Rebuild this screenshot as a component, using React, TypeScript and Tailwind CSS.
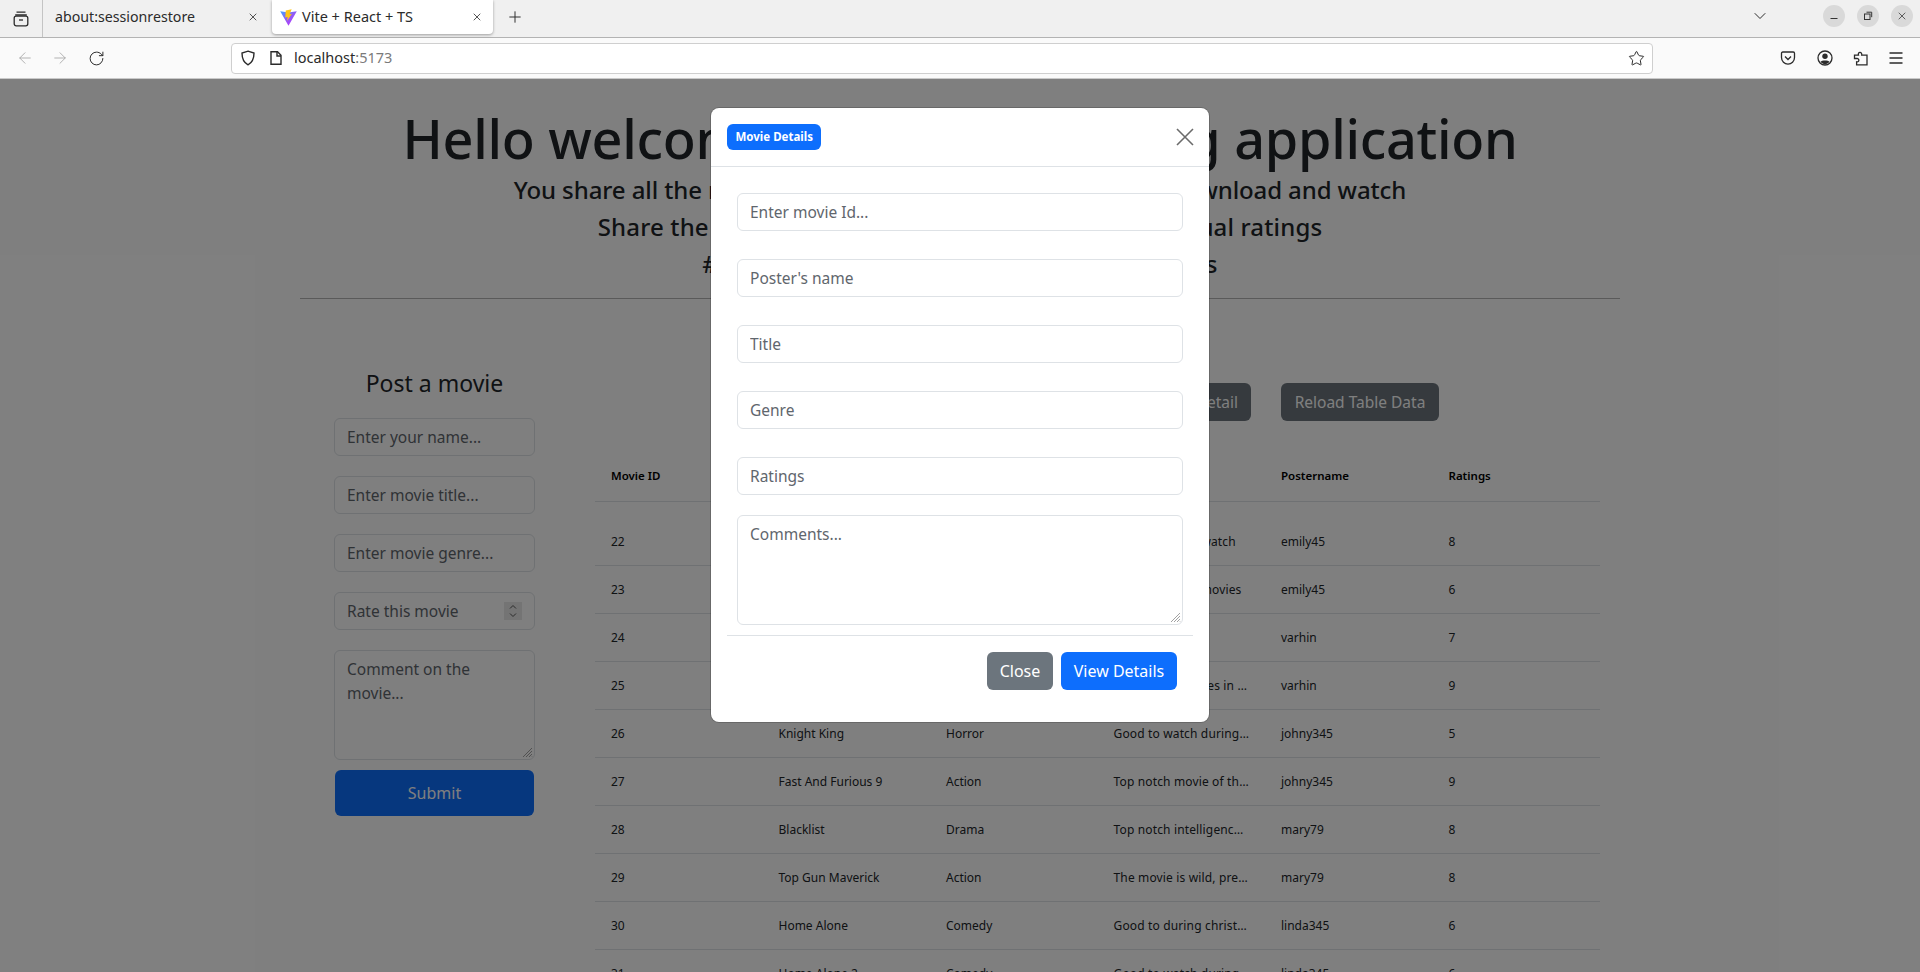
import React from "react";
import { ArrowLeft, ArrowRight, ChevronDown, Plus, RotateCw, Star, X } from "lucide-react";

const rows = [
  ["22", "", "", "Good movie to watch", "emily45", "8"],
  ["23", "", "", "One of the top movies", "emily45", "6"],
  ["24", "", "", "Nice movie", "varhin", "7"],
  ["25", "", "", "Best of the movies in the world", "varhin", "9"],
  ["26", "Knight King", "Horror", "Good to watch during the night", "johny345", "5"],
  ["27", "Fast And Furious 9", "Action", "Top notch movie of the year", "johny345", "9"],
  ["28", "Blacklist", "Drama", "Top notch intelligence movie", "mary79", "8"],
  ["29", "Top Gun Maverick", "Action", "The movie is wild, pretty good", "mary79", "8"],
  ["30", "Home Alone", "Comedy", "Good to during christmas time", "linda345", "6"],
  ["31", "Home Alone 2", "Comedy", "Good to watch during christmas", "linda345", "6"],
];

const inputClass =
  "block h-[38px] w-full rounded-md border border-[#dee2e6] bg-white px-3 text-[15.5px] text-[#212529] placeholder:text-[#5f666d] outline-none";
const textareaClass =
  "block h-[110px] w-full resize-none rounded-md border border-[#dee2e6] bg-white px-3 py-1.5 text-[15.5px] leading-6 text-[#212529] placeholder:text-[#5f666d] outline-none";

const TextArea = ({ placeholder }: { placeholder: string }) => (
  <div className="relative">
    <textarea className={textareaClass} placeholder={placeholder} />
    <svg width="11" height="11" viewBox="0 0 11 11" stroke="#8a8a8a" strokeWidth="0.8" className="absolute bottom-[2px] right-[2px]">
      <path d="M1 10 10 1M4 10l6-6M7 10l3-3M9.5 10l.5-.5" />
    </svg>
  </div>
);

const TabBar = () => (
  <div className="flex h-[38px] items-start border-b border-[#b3b3b3] bg-[#f0f0f0] text-[14px] text-[#2b2b2b]">
    <div className="flex h-[37px] w-[43px] items-center justify-center border-r border-[#c4c4c4]">
      <svg width="16" height="16" viewBox="0 0 16 16" fill="none" stroke="#2b2b2b" strokeWidth="1.3">
        <path d="M3.5 1.2h9M2.2 4h11.6" />
        <rect x="1.2" y="5.2" width="13.6" height="9.6" rx="2" />
        <path d="M6 9h4" />
      </svg>
    </div>
    <div className="flex h-[34px] w-[229px] items-center pl-3 pr-[13px]">
      <span className="flex-1 text-[14.2px]">about:sessionrestore</span>
      <X size={12} strokeWidth={1.6} />
    </div>
    <div className="flex h-[34px] w-[221px] items-center rounded-b-[4px] bg-white pl-2 pr-[10px] shadow-[0_1px_3px_rgba(0,0,0,0.35)]">
      <svg width="17" height="17" viewBox="0 0 16 16" className="mr-[5px]">
        <defs>
          <linearGradient id="vitePurple" x1="0" y1="0" x2="0.8" y2="1">
            <stop offset="0" stopColor="#41a6ff" />
            <stop offset="0.5" stopColor="#8f5cf6" />
            <stop offset="1" stopColor="#bd34fe" />
          </linearGradient>
        </defs>
        <path d="M0.2 2 8 15.8 15.8 2 8 3.4z" fill="url(#vitePurple)" />
        <path d="M11 0.2 5.4 1.3 5 8 7.2 7.5 6.6 11.4 11.2 4.5 9 5 z" fill="#ffc517" />
      </svg>
      <span className="flex-1 text-[14.5px]">Vite + React + TS</span>
      <X size={12} strokeWidth={1.6} />
    </div>
    <div className="flex h-[34px] w-[44px] items-center justify-center">
      <Plus size={18} strokeWidth={1.3} />
    </div>
    <div className="flex-1" />
    <div className="flex h-[32px] items-center">
      <ChevronDown size={20} strokeWidth={1.2} className="mr-[53px]" />
      <div className="mr-[12px] flex h-[22px] w-[22px] items-center justify-center rounded-full bg-[#d9d9d9]">
        <svg width="10" height="10" viewBox="0 0 10 10" stroke="#333" strokeWidth="1"><path d="M1.5 7.5h7" /></svg>
      </div>
      <div className="mr-[12px] flex h-[22px] w-[22px] items-center justify-center rounded-full bg-[#d9d9d9]">
        <svg width="10" height="10" viewBox="0 0 10 10" fill="none" stroke="#333" strokeWidth="1"><rect x="1.5" y="3" width="5.5" height="5.5" /><path d="M3.5 1.2h5.2v5" /></svg>
      </div>
      <div className="mr-[7px] flex h-[22px] w-[22px] items-center justify-center rounded-full bg-[#d9d9d9]">
        <X size={12} strokeWidth={1.5} color="#333" />
      </div>
    </div>
  </div>
);

const NavBar = () => (
  <div className="flex h-[41px] items-center border-b border-[#c9c9c9] bg-[#fafafa] text-[#2b2b2b]">
    <div className="flex w-[231px] items-center pl-[16px]">
      <ArrowLeft size={18} strokeWidth={1.1} color="#a3a3a3" />
      <ArrowRight size={18} strokeWidth={1.1} color="#a3a3a3" className="ml-[17px]" />
      <RotateCw size={17} strokeWidth={1.4} className="ml-[19px]" />
    </div>
    <div className="flex h-[31px] w-[1422px] items-center rounded-[4px] border border-[#cfcfcf] bg-white pl-[8px] pr-[7px]">
      <svg width="16" height="16" viewBox="0 0 16 16" fill="none" stroke="#2b2b2b" strokeWidth="1.4">
        <path d="M8 1.2 14 3c0 6-1.5 9.5-6 11.8C3.5 12.5 2 9 2 3z" />
      </svg>
      <svg width="16" height="16" viewBox="0 0 16 16" fill="none" stroke="#2b2b2b" strokeWidth="1.4" className="ml-[12px]">
        <path d="M3 1.7h6.5L13 5.2v9.1H3z" />
        <path d="M9 1.7V6h4" />
      </svg>
      <span className="ml-[10px] flex-1 text-[14.5px]">
        localhost<span className="text-[#7a7a7a]">:5173</span>
      </span>
      <Star size={17} strokeWidth={1.4} />
    </div>
    <div className="flex flex-1 items-center">
      <svg width="16" height="16" viewBox="0 0 16 16" fill="none" stroke="#2b2b2b" strokeWidth="1.3" className="ml-[127px]">
        <path d="M2.8 2h10.4c.8 0 1.3.5 1.3 1.3v4.2c0 3.8-3 6.7-6.5 6.7s-6.5-2.9-6.5-6.7V3.3C1.5 2.5 2 2 2.8 2z" />
        <path d="M5 6.5 8 9.5l3-3" />
      </svg>
      <svg width="16" height="16" viewBox="0 0 16 16" className="ml-[21px]">
        <circle cx="8" cy="8" r="7" fill="none" stroke="#2b2b2b" strokeWidth="1.3" />
        <circle cx="8" cy="6.2" r="2.7" fill="#2b2b2b" />
        <path d="M3.5 11.6C5 10 11 10 12.5 11.6 11.5 13.5 9.5 14.3 8 14.3s-3.5-.8-4.5-2.7z" fill="#2b2b2b" />
      </svg>
      <svg width="16" height="16" viewBox="0 0 16 16" fill="none" stroke="#2b2b2b" strokeWidth="1.3" className="ml-[20px]">
        <path d="M1.5 8.5V5.2h4c-1.2-3.4 4-3.9 3.2 0h5.3v9.6H3.6v-3c3 .8 3-3.8 0-3.3z" />
      </svg>
      <svg width="16" height="16" viewBox="0 0 16 16" stroke="#2b2b2b" strokeWidth="1.3" className="ml-[19px]">
        <path d="M1.5 3h13M1.5 8h13M1.5 13h13" />
      </svg>
    </div>
  </div>
);

const PostForm = () => (
  <div className="ml-[34px] w-[201px] pt-[67px]">
    <h4 className="mb-[17px] text-center text-[23px] text-[#212529]">Post a movie</h4>
    <div className="flex flex-col gap-5">
      <input className={inputClass} placeholder="Enter your name..." />
      <input className={inputClass} placeholder="Enter movie title..." />
      <input className={inputClass} placeholder="Enter movie genre..." />
      <div className="relative">
        <input className={inputClass} placeholder="Rate this movie" />
        <div className="absolute right-[13px] top-[10px] flex h-[18px] w-[18px] items-center justify-center bg-[#e9e9e9]">
          <svg width="10" height="14" viewBox="0 0 10 14" fill="none" stroke="#555" strokeWidth="1">
            <path d="M2 4.5 5 1.5l3 3M2 9.5l3 3 3-3" />
          </svg>
        </div>
      </div>
      <TextArea placeholder="Comment on the movie..." />
    </div>
    <button className="mx-auto mt-[10px] block h-[46px] w-[199px] rounded-md bg-[#0d6efd] text-base text-white">Submit</button>
  </div>
);

const MovieTable = () => (
  <div className="ml-[60px] w-[1005px] pt-[84px]">
    <div className="flex h-[38px] justify-end pr-[161px] text-[15.5px] text-white">
      <button className="mr-[30px] h-[38px] rounded-md bg-[#6c757d] px-[13px]">Get Movie Detail</button>
      <button className="h-[38px] w-[158px] rounded-md bg-[#6c757d]">Reload Table Data</button>
    </div>
    <table className="mt-[28px] w-full table-fixed border-collapse text-xs text-[#212529]">
      <thead>
        <tr className="h-[52px] border-b border-[#dee2e6] text-left text-[11.5px] font-semibold text-black">
          <th className="px-4 pt-px font-semibold">Movie ID</th>
          <th className="px-4 pt-px font-semibold">Title</th>
          <th className="px-4 pt-px font-semibold">Genre</th>
          <th className="px-4 pt-px font-semibold">Comments</th>
          <th className="px-4 pt-px font-semibold">Postername</th>
          <th className="px-4 pt-px font-semibold">Ratings</th>
        </tr>
      </thead>
      <tbody>
        {rows.map((row, i) => (
          <tr key={row[0]} className={`border-b border-[#dee2e6] ${i === 0 ? "h-[64px]" : "h-[48px]"}`}>
            {row.map((cell, j) => (
              <td key={j} className={`truncate px-4 ${i === 0 ? "pt-[17px]" : "pt-px"} ${j === 3 ? "tracking-[0.15px]" : ""}`}>
                {cell}
              </td>
            ))}
          </tr>
        ))}
      </tbody>
    </table>
  </div>
);

const MovieModal = () => (
  <div className="absolute inset-0 flex items-start justify-center bg-black/50 pt-[29px]">
    <div className="h-[614px] w-[498px] rounded-lg bg-white shadow-[0_0_0_1px_rgba(0,0,0,0.175)]">
      <div className="flex h-[59px] items-center justify-between border-b border-[#dee2e6] pl-4 pr-[15px]">
        <span className="flex h-[26px] items-center rounded-md bg-[#0d6efd] px-[8.5px] text-[11.5px] font-bold text-white">Movie Details</span>
        <svg width="18" height="18" viewBox="0 0 18 18" stroke="#6b6b6b" strokeWidth="1.6">
          <path d="M1 1 17 17M17 1 1 17" />
        </svg>
      </div>
      <div className="px-4 pt-[26px]">
        <div className="flex flex-col gap-7 px-[10px]">
          <input className={inputClass} placeholder="Enter movie Id..." />
          <input className={inputClass} placeholder="Poster's name" />
          <input className={inputClass} placeholder="Title" />
          <input className={inputClass} placeholder="Genre" />
          <input className={inputClass} placeholder="Ratings" />
        </div>
        <div className="mt-5 px-[10px]">
          <TextArea placeholder="Comments..." />
        </div>
        <div className="mt-[10px] border-t border-[#dee2e6] pt-[16px]">
          <div className="flex justify-end gap-2 pr-4 text-base text-white">
            <button className="h-[38px] w-[66px] rounded-md bg-[#6c757d]">Close</button>
            <button className="h-[38px] w-[116px] rounded-md bg-[#0d6efd]">View Details</button>
          </div>
        </div>
      </div>
    </div>
  </div>
);

const App: React.FC = () => {
  return (
    <div className="flex h-[972px] flex-col overflow-hidden font-['Noto_Sans',sans-serif]">
      <TabBar />
      <NavBar />
      <div className="relative flex-1 overflow-hidden bg-white text-[#212529]">
        <div className="mx-auto w-[1320px]">
          <div className="border-b border-[#b5b5b5] pb-[20px] pt-[26px] text-center">
            <h1 className="mb-1 text-[54px] font-medium leading-[67px] tracking-[-0.3px]">Hello welcome to movie sharing application</h1>
            <h4 className="mb-2 text-2xl font-medium leading-[1.2] tracking-[-0.1px]">You share all the movies of your interest for the others to download and watch</h4>
            <h4 className="mb-2 text-2xl font-medium leading-[1.2] tracking-[0.15px]">Share the movies you love with everyone to give actual ratings</h4>
            <h4 className="text-2xl font-medium leading-[1.2] tracking-[0.2px]">#movies #sharing #watch #ratings #reviews</h4>
          </div>
          <div className="flex">
            <PostForm />
            <MovieTable />
          </div>
        </div>
        <MovieModal />
      </div>
    </div>
  );
};

export default App;
